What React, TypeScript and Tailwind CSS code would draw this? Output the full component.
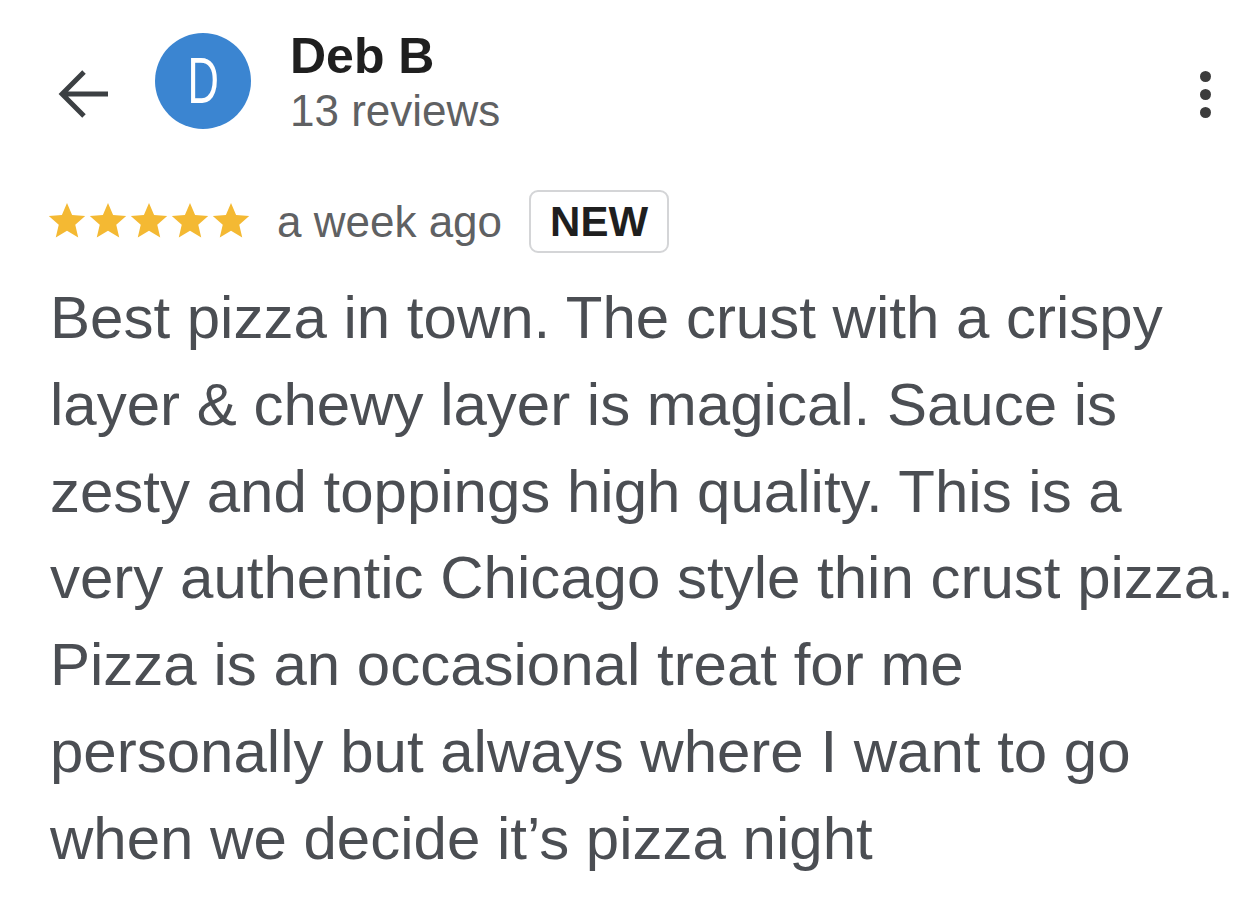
import React from 'react';

function Star() {
  return (
    <svg viewBox="1 1.5 22 22" className="h-[40px] w-[40px]" fill="#f4b933">
      <path d="M12 17.27L18.18 21l-1.64-7.03L22 9.24l-7.19-.61L12 2 9.19 8.63 2 9.24l5.46 4.73L5.82 21z" />
    </svg>
  );
}

export default function App() {
  return (
    <div className="w-[1259px] h-[905px] bg-white overflow-hidden font-[family-name:Liberation_Sans,Arial,sans-serif]">
      <div className="flex items-start pl-[48px] pt-[28px]">
        <svg viewBox="0 0 24 24" className="mt-[30px] h-[72px] w-[72px]" fill="none" stroke="#3c4043" strokeWidth="1.65">
          <path d="M20 12H5M12 4.7L4.7 12 12 19.3" />
        </svg>
        <div className="ml-[35px] mt-[5px] flex h-[96px] w-[96px] items-center justify-center rounded-full bg-[#3b85d1]">
          <span className="scale-x-[0.68] text-[64px] leading-none text-white">D</span>
        </div>
        <div className="ml-[39px] flex flex-col">
          <div className="text-[50px] font-bold leading-[56px] text-[#1f1f1f]">Deb B</div>
          <div className="mt-[3px] text-[44px] leading-[48px] text-[#5f6163]">13 reviews</div>
        </div>
        <div className="ml-auto mr-[48px] mt-[43px] flex flex-col gap-[7px]">
          <span className="h-[11px] w-[11px] rounded-full bg-[#3c3c3c]" />
          <span className="h-[11px] w-[11px] rounded-full bg-[#3c3c3c]" />
          <span className="h-[11px] w-[11px] rounded-full bg-[#3c3c3c]" />
        </div>
      </div>

      <div className="mt-[55px] flex items-center pl-[47px]">
        <div className="flex gap-[1px]">
          <Star />
          <Star />
          <Star />
          <Star />
          <Star />
        </div>
        <span className="ml-[26px] text-[44px] leading-[48px] text-[#5f6163]">a week ago</span>
        <span className="ml-[27px] rounded-[9px] border-2 border-[#d4d5d7] px-[19px] text-[42px] font-bold leading-[59px] text-[#1f1f1f]">
          NEW
        </span>
      </div>

      <p className="mt-[22px] pl-[50px] pr-[12px] text-[60px] leading-[86.8px] text-[#4b4e53]">
        Best pizza in town. The crust with a crispy layer &amp; chewy layer is magical. Sauce is zesty and toppings high quality. This is a very authentic Chicago style thin crust pizza. Pizza is an occasional treat for me personally but always where I want to go when we decide it’s pizza night
      </p>
    </div>
  );
}
